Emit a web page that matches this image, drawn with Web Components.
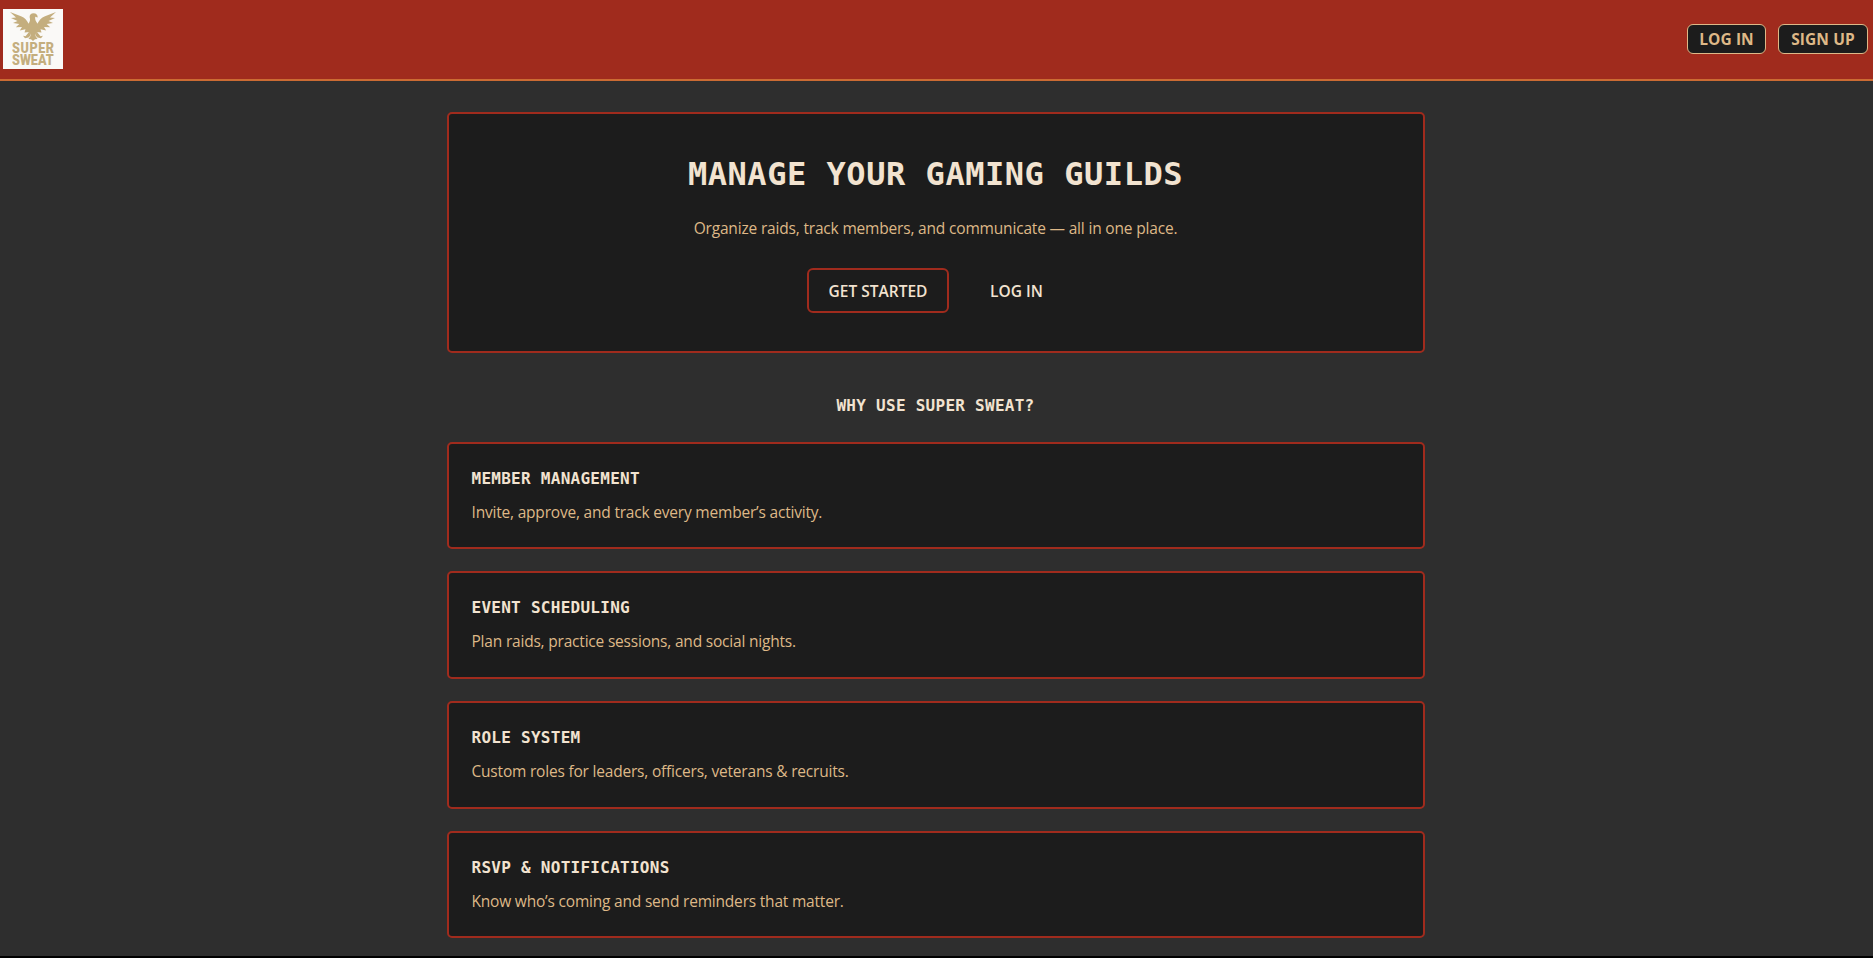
<!DOCTYPE html>
<html lang="en">
<head>
<meta charset="utf-8">
<title>Super Sweat</title>
<style>
  html {
    background: #2e2e2e;
  }

  body {
    margin: 0;
    color: #deb887;
    font: 15.5px/24px "Open Sans", "Segoe UI", sans-serif;
    --red: #a02b1d;
    --dark: #1c1c1c;
    --cream: #f2e3d0;
    --tan: #deb887;
    --mono: "DejaVu Sans Mono", Consolas, monospace;
  }
</style>
</head>
<body>
<ss-app></ss-app>

<script>
const define = (name, html, setup) => {
  const template = document.createElement("template");
  template.innerHTML = html;

  window.customElements.define(name, class extends HTMLElement {
    constructor() {
      super();
      this._shadowRoot = this.attachShadow({ mode: "open" });
      this._shadowRoot.appendChild(template.content.cloneNode(true));
    }

    connectedCallback() {
      if (setup) setup(this, this._shadowRoot);
    }
  });
};

define("ss-logo", `
  <style>
    :host {
      display: block;
      width: 60px;
      height: 60px;
      background: #faf9f7;
    }

    svg {
      display: block;
    }

    div {
      width: 52px;
      margin-left: 9px;
      color: #c4ae7e;
      font: 900 15px/11.7px "Roboto", sans-serif;
      transform: scaleX(0.84);
      transform-origin: 0 0;
    }

    div::first-line {
      letter-spacing: 0.7px;
    }
  </style>
  <svg width="60" height="34" viewBox="0 0 60 34" fill="#c4ae7e">
    <g id="wing">
      <path d="M7 3 L18 7.2 Q23.5 9.5 25.5 15 L27 23 L21.5 23.5 L22.5 20.3 L16.8 21.5 L19 18 L12.8 18.3 L16.3 15 L10 14 L14.5 12 L8 9 L13 8.6 Z"/>
      <path d="M26 23 L22.5 27.2 L20 26.8 L22 29.2 L25.5 28.6 L28 26 Z"/>
    </g>
    <use href="#wing" transform="matrix(-1 0 0 1 60 0)"/>
    <path d="M25 15 Q28 12 26.6 8 Q26.8 4.3 30.5 4.3 Q34.8 4.5 34.7 8.6 L32.2 7.7 Q31.6 11.5 35 15 L34.5 23 L31.8 26 L34.5 30 L32 30.2 L30 32 L28 30.2 L25.5 30 L28.2 26 L25.5 23 Z"/>
  </svg>
  <div>SUPER SWEAT</div>
`);

define("ss-nav-button", `
  <style>
    :host {
      display: block;
    }

    button {
      display: block;
      box-sizing: border-box;
      width: 100%;
      height: 30px;
      padding: 0;
      border: 1px solid var(--tan);
      border-radius: 6px;
      background: var(--dark);
      color: var(--tan);
      font: bold 15.5px/26px "Open Sans", sans-serif;
      letter-spacing: 0.08px;
    }
  </style>
  <button><slot></slot></button>
`);

define("ss-header", `
  <style>
    :host {
      display: flex;
      justify-content: space-between;
      box-sizing: border-box;
      height: 81px;
      padding: 9px 5px 0 3px;
      border-bottom: 2px solid #cb6b33;
      background: var(--red);
    }

    nav {
      display: flex;
      gap: 12px;
      padding-top: 15px;
    }
  </style>
  <ss-logo></ss-logo>
  <nav><slot></slot></nav>
`);

define("ss-button", `
  <style>
    :host {
      display: block;
    }

    button {
      box-sizing: border-box;
      display: block;
      width: 100%;
      height: 45px;
      padding: 0;
      border: 2px solid transparent;
      border-radius: 6px;
      background: none;
      color: var(--cream);
      font: 600 15.5px/24px "Open Sans", sans-serif;
    }

    :host([outlined]) button {
      border-color: var(--red);
    }
  </style>
  <button><slot></slot></button>
`);

define("ss-hero", `
  <style>
    :host {
      display: block;
      box-sizing: border-box;
      height: 241px;
      padding: 38px 1px 0 0;
      border: 2px solid var(--red);
      border-radius: 5px;
      background: var(--dark);
      text-align: center;
    }

    h1 {
      margin: 0 0 20px;
      color: var(--cream);
      font: bold 32px/44px var(--mono);
      letter-spacing: 0.54px;
    }

    p {
      margin: 0 0 28px;
      letter-spacing: -0.18px;
    }

    .actions {
      display: flex;
      justify-content: center;
      gap: 20px;
    }
  </style>
  <h1><slot name="title"></slot></h1>
  <p><slot name="text"></slot></p>
  <div class="actions"><slot></slot></div>
`);

define("ss-feature", `
  <style>
    :host {
      display: block;
      box-sizing: border-box;
      height: 107.6px;
      padding: 23px 22.5px 0;
      border: 2px solid var(--red);
      border-radius: 5px;
      background: var(--dark);
    }

    h3 {
      margin: 0 0 9px;
      color: var(--cream);
      font: bold 16px/24px var(--mono);
      letter-spacing: 0.27px;
    }

    p {
      margin: 0;
      letter-spacing: -0.2px;
    }
  </style>
  <h3></h3>
  <p><slot></slot></p>
`, (host, root) => {
  root.querySelector("h3").textContent = host.getAttribute("heading");
});

define("ss-app", `
  <style>
    :host {
      display: flex;
      flex-direction: column;
      box-sizing: border-box;
      height: 958px;
      border-bottom: 2px solid #000;
      overflow: hidden;
    }

    main {
      width: 978px;
      margin: 31px auto 0;
      padding-right: 1px;
    }

    h2 {
      margin: 41px 1px 23.8px 0;
      color: var(--cream);
      font: bold 16px/24px var(--mono);
      letter-spacing: 0.27px;
      text-align: center;
    }

    .features {
      display: flex;
      flex-direction: column;
      gap: 22px;
    }
  </style>
  <ss-header>
    <ss-nav-button style="width: 79px">LOG IN</ss-nav-button>
    <ss-nav-button style="width: 90px">SIGN UP</ss-nav-button>
  </ss-header>
  <main>
    <ss-hero>
      <span slot="title">MANAGE YOUR GAMING GUILDS</span>
      <span slot="text">Organize raids, track members, and communicate — all in one place.</span>
      <ss-button outlined style="width: 142px">GET STARTED</ss-button>
      <ss-button style="width: 95px">LOG IN</ss-button>
    </ss-hero>
    <h2>WHY USE SUPER SWEAT?</h2>
    <div class="features">
      <ss-feature heading="MEMBER MANAGEMENT">Invite, approve, and track every member’s activity.</ss-feature>
      <ss-feature heading="EVENT SCHEDULING">Plan raids, practice sessions, and social nights.</ss-feature>
      <ss-feature heading="ROLE SYSTEM">Custom roles for leaders, officers, veterans &amp; recruits.</ss-feature>
      <ss-feature heading="RSVP &amp; NOTIFICATIONS">Know who’s coming and send reminders that matter.</ss-feature>
    </div>
  </main>
`);
</script>
</body>
</html>
